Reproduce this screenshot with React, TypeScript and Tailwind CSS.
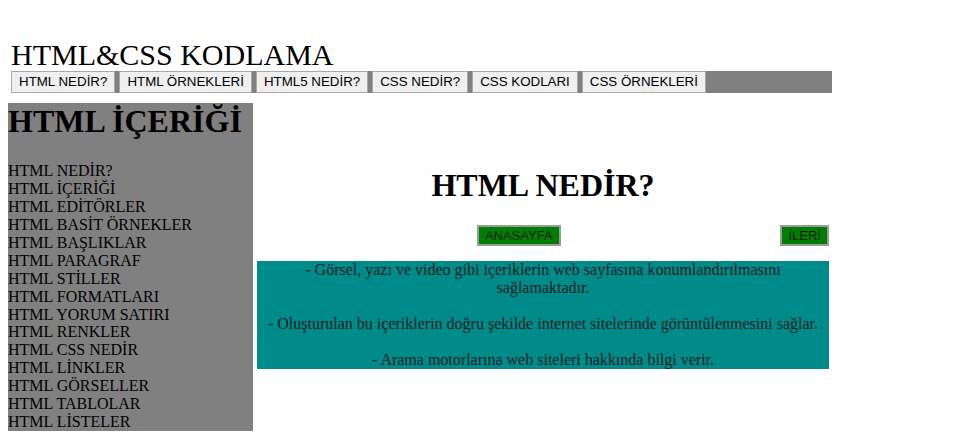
import React from 'react';

const NAV = ['HTML NEDİR?', 'HTML ÖRNEKLERİ', 'HTML5 NEDİR?', 'CSS NEDİR?', 'CSS KODLARI', 'CSS ÖRNEKLERİ'];

const LINKS = [
  'HTML NEDİR?',
  'HTML İÇERİĞİ',
  'HTML EDİTÖRLER',
  'HTML BASİT ÖRNEKLER',
  'HTML BAŞLIKLAR',
  'HTML PARAGRAF',
  'HTML STİLLER',
  'HTML FORMATLARI',
  'HTML YORUM SATIRI',
  'HTML RENKLER',
  'HTML CSS NEDİR',
  'HTML LİNKLER',
  'HTML GÖRSELLER',
  'HTML TABLOLAR',
  'HTML LİSTELER',
];

export default function App() {
  return (
    <div className="min-h-[442px] bg-white pt-[38px] pl-[8px] text-black font-['Liberation_Serif',serif]">
      {/* site title */}
      <div className="pl-[3px] text-[30px] leading-[33px]">HTML&amp;CSS KODLAMA</div>

      {/* top menu */}
      <div className="ml-[3px] flex h-[22px] w-[821px] items-center gap-[4px] bg-[#808080]">
        {NAV.map((n) => (
          <button
            key={n}
            className="h-[22px] border border-[#a8a8a8] bg-[#efefef] px-[7px] font-['Liberation_Sans',Arial,sans-serif] text-[13.333px] leading-[18px] text-black"
          >
            {n}
          </button>
        ))}
      </div>

      <div className="mt-[10px] flex items-start gap-[4px]">
        {/* side menu */}
        <div className="w-[245px] bg-[#808080]">
          <div className="text-[32px] font-bold leading-[37px]">HTML İÇERİĞİ</div>
          <ul className="mt-[22px] text-[16px] leading-[17.93px]">
            {LINKS.map((l) => (
              <li key={l}>{l}</li>
            ))}
          </ul>
        </div>

        {/* content */}
        <div className="w-[572px] pt-[64px]">
          <h1 className="text-center text-[32px] font-bold leading-[37px]">HTML NEDİR?</h1>
          <div className="mt-[21px] flex h-[21px] items-center font-['Liberation_Sans',Arial,sans-serif] text-[13px] leading-[15px]">
            <div className="flex flex-1 justify-center">
              <button className="border-2 border-[#9a9a9a] bg-[#008000] px-[6px] py-[1px] text-[#0a1a0a]">ANASAYFA</button>
            </div>
            <button className="border-2 border-[#9a9a9a] bg-[#008000] px-[6px] py-[1px] text-[#0a1a0a]">İLERİ</button>
          </div>
          <div className="mt-[15px] bg-[#008b8b] text-center text-[16px] leading-[18px] text-[#0b1c1c]">
            - Görsel, yazı ve video gibi içeriklerin web sayfasına konumlandırılmasını
            <br />
            sağlamaktadır.
            <br />
            <br />
            - Oluşturulan bu içeriklerin doğru şekilde internet sitelerinde görüntülenmesini sağlar.
            <br />
            <br />
            - Arama motorlarına web siteleri hakkında bilgi verir.
          </div>
        </div>
      </div>
    </div>
  );
}
